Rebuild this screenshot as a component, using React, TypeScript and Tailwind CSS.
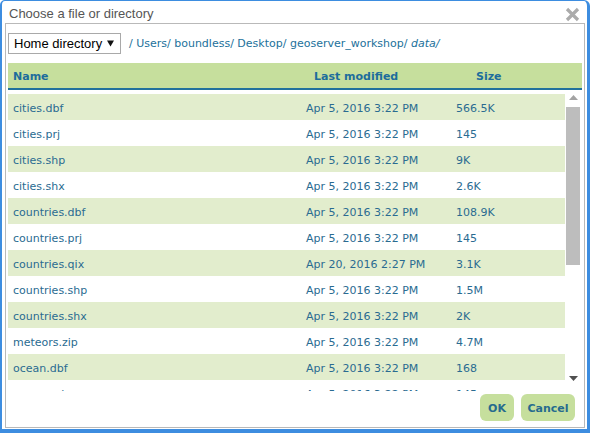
import React from 'react';

type FileRow = { name: string; modified: string; size: string };

const files: FileRow[] = [
  { name: 'cities.dbf', modified: 'Apr 5, 2016 3:22 PM', size: '566.5K' },
  { name: 'cities.prj', modified: 'Apr 5, 2016 3:22 PM', size: '145' },
  { name: 'cities.shp', modified: 'Apr 5, 2016 3:22 PM', size: '9K' },
  { name: 'cities.shx', modified: 'Apr 5, 2016 3:22 PM', size: '2.6K' },
  { name: 'countries.dbf', modified: 'Apr 5, 2016 3:22 PM', size: '108.9K' },
  { name: 'countries.prj', modified: 'Apr 5, 2016 3:22 PM', size: '145' },
  { name: 'countries.qix', modified: 'Apr 20, 2016 2:27 PM', size: '3.1K' },
  { name: 'countries.shp', modified: 'Apr 5, 2016 3:22 PM', size: '1.5M' },
  { name: 'countries.shx', modified: 'Apr 5, 2016 3:22 PM', size: '2K' },
  { name: 'meteors.zip', modified: 'Apr 5, 2016 3:22 PM', size: '4.7M' },
  { name: 'ocean.dbf', modified: 'Apr 5, 2016 3:22 PM', size: '168' },
  { name: 'ocean.prj', modified: 'Apr 5, 2016 3:22 PM', size: '145' },
  { name: 'ocean.shp', modified: 'Apr 5, 2016 3:22 PM', size: '1.1M' },
];

const crumbs = ['Users/', 'boundless/', 'Desktop/', 'geoserver_workshop/'];

const verdana = "font-['DejaVu_Sans',Verdana,sans-serif]";

export default function App() {
  return (
    <div className="w-[590px] h-[433px] bg-white flex flex-col border-l-2 border-t border-r-[3px] border-b-4 border-[#3d8de0] rounded-tl-[5px] rounded-tr-[6px] pl-[3px] pr-[2px] pb-[1px]">
      {/* Title bar */}
      <div className="h-[22px] shrink-0 flex items-center justify-between pl-[4px] pr-[5px]">
        <span className="font-['Liberation_Sans',Arial,sans-serif] text-[13px] text-[#555] pt-[4px]">
          Choose a file or directory
        </span>
        <svg width="15" height="15" viewBox="0 0 15 15" className="mt-[5px]">
          <path d="M2 2 L13 13 M13 2 L2 13" stroke="#ababab" strokeWidth="3.2" strokeLinecap="butt" />
        </svg>
      </div>

      {/* Body */}
      <div className={`flex-1 border border-[#b9b9b9] flex flex-col px-[2px] pt-[9px] pb-[6px] ${verdana}`}>
        {/* Path row */}
        <div className="flex items-center h-[21px] shrink-0">
          <div className="w-[113px] h-[21px] border border-[#a9a9a9] bg-white flex items-center justify-between pl-[5px] pr-[6px]">
            <span className="font-['Liberation_Sans',Arial,sans-serif] text-[13px] text-black">Home directory</span>
            <svg width="7" height="7" viewBox="0 0 7 7">
              <path d="M0 0.5 H7 L3.5 6.5 Z" fill="#111" />
            </svg>
          </div>
          <div className="ml-[8px] pt-[2px] text-[11px] text-[#22719b] flex items-center whitespace-pre">
            <span>/ </span>
            {crumbs.map(c => (
              <span key={c}>{c} </span>
            ))}
            <span className="italic">data/</span>
          </div>
        </div>

        {/* Header */}
        <div className="mt-[9px] h-[27px] pt-[4px] shrink-0 bg-[#c6df9d] border-b-2 border-[#21729c] flex items-center text-[11px] font-bold text-[#1d6d9c]">
          <div className="w-[298px] pl-[5px]">Name</div>
          <div className="w-[150px] pl-[8px]">Last modified</div>
          <div className="pl-[20px]">Size</div>
        </div>

        {/* List + scrollbar */}
        <div className="mt-[4px] h-[297px] shrink-0 flex">
          <div className="w-[557px] overflow-hidden">
            {files.map((f, i) => (
              <div
                key={f.name}
                className={`h-[26px] pt-[4px] flex items-center text-[11px] text-[#2a6b91] ${i % 2 === 0 ? 'bg-[#e2edcd]' : 'bg-white'}`}
              >
                <div className="w-[298px] pl-[5px]">{f.name}</div>
                <div className="w-[150px]">{f.modified}</div>
                <div>{f.size}</div>
              </div>
            ))}
          </div>
          <div className="ml-[1px] -mt-[1px] w-[14px] flex flex-col items-center">
            <svg width="9" height="5" viewBox="0 0 9 5" className="mt-[2px]">
              <path d="M0 5 L4.5 0 L9 5 Z" fill="#a3a3a3" />
            </svg>
            <div className="mt-[7px] w-[14px] h-[158px] bg-[#bdbdbd]" />
            <div className="flex-1" />
            <svg width="9" height="5" viewBox="0 0 9 5" className="mb-[10px]">
              <path d="M0 0 H9 L4.5 5 Z" fill="#505050" />
            </svg>
          </div>
        </div>

        {/* Buttons */}
        <div className="mt-[3px] flex justify-end gap-[7px] pr-[7px]">
          <button className="w-[34px] h-[27px] pt-[3px] rounded-[6px] bg-[#c6df9d] text-[11px] font-bold text-[#266b8e]">OK</button>
          <button className="w-[54px] h-[27px] pt-[3px] rounded-[6px] bg-[#c6df9d] text-[11px] font-bold text-[#266b8e]">Cancel</button>
        </div>
      </div>
    </div>
  );
}
